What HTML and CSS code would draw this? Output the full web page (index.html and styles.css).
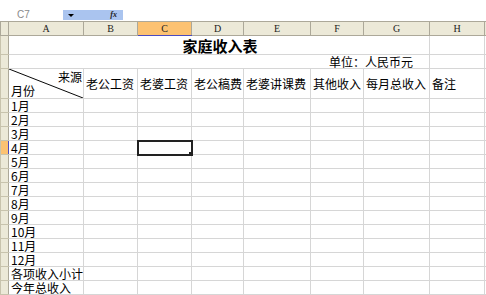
FILE: index.html
```html
<!DOCTYPE html>
<html lang="zh-CN">

<head>
    <meta charset="UTF-8">
    <meta name="viewport" content="width=device-width, initial-scale=1.0">
    <title>家庭收入表</title>
    <link rel="stylesheet" href="styles.css">
</head>

<body>
    <div class="formula-bar">
        <div class="name-box">C7</div>
        <div class="name-drop">
            <span class="arrow"></span>
            <span class="fx">fx</span>
        </div>
    </div>

    <table class="sheet">
        <colgroup>
            <col class="w-rh">
            <col class="w-a">
            <col class="w-b">
            <col class="w-c">
            <col class="w-d">
            <col class="w-e">
            <col class="w-f">
            <col class="w-g">
            <col class="w-h">
            <col class="w-edge">
        </colgroup>
        <thead>
            <tr class="col-head">
                <th class="rh"></th>
                <th>A</th>
                <th>B</th>
                <th class="on">C</th>
                <th>D</th>
                <th>E</th>
                <th>F</th>
                <th>G</th>
                <th>H</th>
                <th class="edge"></th>
            </tr>
        </thead>
        <tbody>
            <tr class="row-title">
                <td class="rh"></td>
                <td colspan="7" class="title">家庭收入表</td>
                <td></td>
                <td class="edge"></td>
            </tr>
            <tr>
                <td class="rh"></td>
                <td colspan="7" class="unit">单位：人民币元</td>
                <td></td>
                <td class="edge"></td>
            </tr>
            <tr class="row-head">
                <td class="rh"></td>
                <td class="diag">
                    <svg class="diag-line" viewBox="0 0 75 30" preserveAspectRatio="none">
                        <line x1="0" y1="0" x2="75" y2="30" stroke="#000" stroke-width="1" />
                    </svg>
                    <span class="diag-top">来源</span>
                    <span class="diag-bottom">月份</span>
                </td>
                <td>老公工资</td>
                <td>老婆工资</td>
                <td>老公稿费</td>
                <td>老婆讲课费</td>
                <td>其他收入</td>
                <td>每月总收入</td>
                <td>备注</td>
                <td class="edge"></td>
            </tr>
            <tr><td class="rh"></td><td>1月</td><td></td><td></td><td></td><td></td><td></td><td></td><td></td><td class="edge"></td></tr>
            <tr><td class="rh"></td><td>2月</td><td></td><td></td><td></td><td></td><td></td><td></td><td></td><td class="edge"></td></tr>
            <tr><td class="rh"></td><td>3月</td><td></td><td></td><td></td><td></td><td></td><td></td><td></td><td class="edge"></td></tr>
            <tr><td class="rh on"></td><td>4月</td><td></td><td class="active"></td><td></td><td></td><td></td><td></td><td></td><td class="edge"></td></tr>
            <tr><td class="rh"></td><td>5月</td><td></td><td></td><td></td><td></td><td></td><td></td><td></td><td class="edge"></td></tr>
            <tr><td class="rh"></td><td>6月</td><td></td><td></td><td></td><td></td><td></td><td></td><td></td><td class="edge"></td></tr>
            <tr><td class="rh"></td><td>7月</td><td></td><td></td><td></td><td></td><td></td><td></td><td></td><td class="edge"></td></tr>
            <tr><td class="rh"></td><td>8月</td><td></td><td></td><td></td><td></td><td></td><td></td><td></td><td class="edge"></td></tr>
            <tr><td class="rh"></td><td>9月</td><td></td><td></td><td></td><td></td><td></td><td></td><td></td><td class="edge"></td></tr>
            <tr><td class="rh"></td><td>10月</td><td></td><td></td><td></td><td></td><td></td><td></td><td></td><td class="edge"></td></tr>
            <tr><td class="rh"></td><td>11月</td><td></td><td></td><td></td><td></td><td></td><td></td><td></td><td class="edge"></td></tr>
            <tr><td class="rh"></td><td>12月</td><td></td><td></td><td></td><td></td><td></td><td></td><td></td><td class="edge"></td></tr>
            <tr><td class="rh"></td><td>各项收入小计</td><td></td><td></td><td></td><td></td><td></td><td></td><td></td><td class="edge"></td></tr>
            <tr><td class="rh"></td><td>今年总收入</td><td></td><td></td><td></td><td></td><td></td><td></td><td></td><td class="edge"></td></tr>
        </tbody>
    </table>
</body>

</html>
```

FILE: styles.css
```css
body {
    margin: 0;
    padding: 0;
    background-color: #fff;
    font-family: "Noto Sans CJK SC", sans-serif;
    overflow: hidden;
}

.formula-bar {
    display: flex;
    align-items: flex-end;
    height: 21px;
    box-sizing: border-box;
    padding-bottom: 1px;
}

.formula-bar .name-box {
    width: 63px;
    height: 10px;
    box-sizing: border-box;
    padding-left: 17px;
    font-family: "Liberation Sans", sans-serif;
    font-size: 10px;
    line-height: 10px;
    color: #8a8a8a;
}

.formula-bar .name-drop {
    display: flex;
    align-items: center;
    justify-content: space-between;
    width: 60px;
    height: 10px;
    box-sizing: border-box;
    padding: 0 6px 0 5px;
    background-color: #aac4ef;
}

.formula-bar .arrow {
    width: 0;
    height: 0;
    border-left: 3px solid transparent;
    border-right: 3px solid transparent;
    border-top: 3px solid #000;
}

.formula-bar .fx {
    font-family: "Liberation Serif", serif;
    font-style: italic;
    font-weight: bold;
    font-size: 8px;
    line-height: 8px;
    color: #222;
}

.sheet {
    border-collapse: collapse;
    table-layout: fixed;
    width: 486px;
}

.sheet .w-rh { width: 8px; }
.sheet .w-a { width: 75px; }
.sheet .w-b { width: 54px; }
.sheet .w-c { width: 54px; }
.sheet .w-d { width: 52px; }
.sheet .w-e { width: 67px; }
.sheet .w-f { width: 53px; }
.sheet .w-g { width: 66px; }
.sheet .w-h { width: 55px; }
.sheet .w-edge { width: 2px; }

.sheet th,
.sheet td {
    padding: 0 0 0 2px;
    border: 1px solid #d6d6d6;
    overflow: hidden;
    white-space: nowrap;
}

.sheet td {
    height: 13px;
    font-size: 12px;
    line-height: 13px;
    vertical-align: bottom;
    color: #000;
}

.sheet .col-head th {
    height: 13px;
    padding: 0;
    border-color: #aca899;
    background-color: #ece9d8;
    font-family: "Liberation Serif", serif;
    font-weight: normal;
    font-size: 10px;
    line-height: 13px;
    text-align: center;
    color: #222;
}

.sheet .col-head th.on {
    background-color: #fcc272;
    border-bottom-color: #4b4bc0;
}

.sheet .rh {
    padding: 0;
    border-color: #c8c3ad;
    border-right-color: #aca899;
    background-color: #ece9d8;
}

.sheet .rh.on {
    background-color: #fcc272;
    border-right-color: #4b4bc0;
}

.sheet .edge {
    padding: 0;
}

.sheet .row-title td {
    height: 18px;
}

.sheet .title {
    font-size: 15px;
    font-weight: bold;
    line-height: 17px;
    text-align: center;
}

.sheet .unit {
    padding-right: 16px;
    text-align: right;
}

.sheet .row-head td {
    height: 29px;
    vertical-align: middle;
}

.sheet .diag {
    position: relative;
}

.sheet .diag-line {
    position: absolute;
    top: 0;
    left: 0;
    width: 100%;
    height: 100%;
}

.sheet .diag-top {
    position: absolute;
    top: 1px;
    right: 1px;
}

.sheet .diag-bottom {
    position: absolute;
    bottom: 1px;
    left: 2px;
}

.sheet .active {
    position: relative;
    outline: 2px solid #222;
    outline-offset: -1px;
}

.sheet .active::after {
    content: "";
    position: absolute;
    right: -3px;
    bottom: -3px;
    width: 4px;
    height: 4px;
    background-color: #222;
    border: 1px solid #fff;
}
```
